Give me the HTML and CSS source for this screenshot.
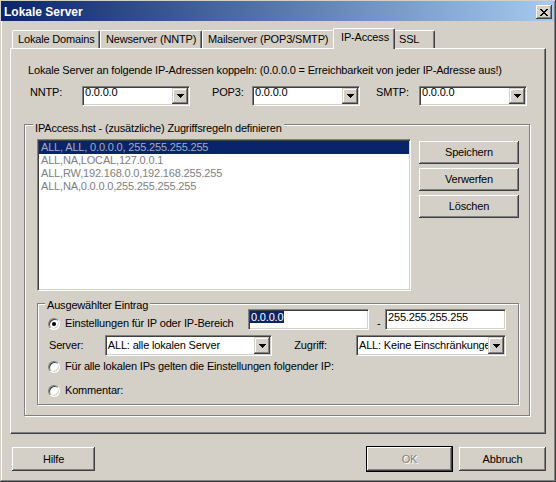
FILE: index.html
```html
<!DOCTYPE html>
<html lang="de">
<head>
    <meta charset="UTF-8">
    <title>Lokale Server</title>
    <link rel="stylesheet" href="styles.css">
</head>
<body>
<div class="window">
    <div class="titlebar">
        <span class="title">Lokale Server</span>
        <span class="close-btn">
            <svg width="8" height="7" viewBox="0 0 8 7" shape-rendering="crispEdges"><path d="M0 0h2v1h1v1h2V1h1V0h2v1H7v1H6v1H5v1h1v1h1v1h1v1H6V6H5V5H3v1H2v1H0V6h1V5h1V4h1V3H2V2H1V1H0z" fill="#000"/></svg>
        </span>
    </div>

    <!-- Reiter -->
    <div class="tabs">
        <div class="tab tab-domains">Lokale Domains</div>
        <div class="tab tab-news">Newserver (NNTP)</div>
        <div class="tab tab-mail">Mailserver (POP3/SMTP)</div>
        <div class="tab tab-ip active">IP-Access</div>
        <div class="tab tab-ssl">SSL</div>
    </div>

    <div class="panel">
        <p class="intro">Lokale Server an folgende IP-Adressen koppeln: (0.0.0.0 = Erreichbarkeit von jeder IP-Adresse aus!)</p>

        <div class="bind-row">
            <span class="bind-label">NNTP:</span>
            <div class="combo bind-combo"><span class="combo-text">0.0.0.0</span><span class="combo-btn"><svg width="7" height="4" viewBox="0 0 7 4" shape-rendering="crispEdges"><path d="M0 0h7v1H6v1H5v1H4v1H3V3H2V2H1V1H0z"/></svg></span></div>
            <span class="bind-label pop3">POP3:</span>
            <div class="combo bind-combo"><span class="combo-text">0.0.0.0</span><span class="combo-btn"><svg width="7" height="4" viewBox="0 0 7 4" shape-rendering="crispEdges"><path d="M0 0h7v1H6v1H5v1H4v1H3V3H2V2H1V1H0z"/></svg></span></div>
            <span class="bind-label smtp">SMTP:</span>
            <div class="combo bind-combo"><span class="combo-text">0.0.0.0</span><span class="combo-btn"><svg width="7" height="4" viewBox="0 0 7 4" shape-rendering="crispEdges"><path d="M0 0h7v1H6v1H5v1H4v1H3V3H2V2H1V1H0z"/></svg></span></div>
        </div>

        <div class="group rules">
            <div class="group-title">IPAccess.hst - (zusätzliche) Zugriffsregeln definieren</div>
            <div class="rules-row">
                <ul class="listbox">
                    <li class="selected">ALL, ALL, 0.0.0.0, 255.255.255.255</li>
                    <li>ALL,NA,LOCAL,127.0.0.1</li>
                    <li>ALL,RW,192.168.0.0,192.168.255.255</li>
                    <li>ALL,NA,0.0.0.0,255.255.255.255</li>
                </ul>
                <div class="side-buttons">
                    <button class="btn side">Speichern</button>
                    <button class="btn side">Verwerfen</button>
                    <button class="btn side">Löschen</button>
                </div>
            </div>

            <div class="group entry">
                <div class="group-title">Ausgewählter Eintrag</div>
                <div class="entry-row">
                    <div class="option range-option"><span class="radio checked"></span>Einstellungen für IP oder IP-Bereich</div>
                    <div class="edit"><span class="sel">0.0.0.0</span></div>
                    <span class="dash">-</span>
                    <div class="edit">255.255.255.255</div>
                </div>
                <div class="entry-row second">
                    <span class="field-label server-label">Server:</span>
                    <div class="combo server-combo"><span class="combo-text">ALL: alle lokalen Server</span><span class="combo-btn"><svg width="7" height="4" viewBox="0 0 7 4" shape-rendering="crispEdges"><path d="M0 0h7v1H6v1H5v1H4v1H3V3H2V2H1V1H0z"/></svg></span></div>
                    <span class="field-label zugriff-label">Zugriff:</span>
                    <div class="combo zugriff-combo"><span class="combo-text">ALL: Keine Einschränkungen</span><span class="combo-btn"><svg width="7" height="4" viewBox="0 0 7 4" shape-rendering="crispEdges"><path d="M0 0h7v1H6v1H5v1H4v1H3V3H2V2H1V1H0z"/></svg></span></div>
                </div>
                <div class="option radio-row third"><span class="radio"></span>Für alle lokalen IPs gelten die Einstellungen folgender IP:</div>
                <div class="option radio-row fourth"><span class="radio"></span>Kommentar:</div>
            </div>
        </div>
    </div>

    <div class="footer">
        <button class="btn help">Hilfe</button>
        <span class="spacer"></span>
        <button class="btn default" disabled>OK</button>
        <button class="btn cancel">Abbruch</button>
    </div>
</div>
</body>
</html>
```

FILE: styles.css
```css
* {
    box-sizing: border-box;
}
body {
    margin: 0;
    font-family: "Liberation Sans", Arial, sans-serif;
    font-size: 11px;
    line-height: 13px;
    letter-spacing: -0.17px;
    color: #000;
    background: #D4D0C8;
}
.window {
    width: 556px;
    height: 482px;
    padding: 1px 2px 2px 1px;
    background: #D4D0C8;
    box-shadow: inset -1px -1px #404040, inset 1px 1px #D4D0C8, inset -2px -2px #808080, inset 2px 2px #fff;
}

/* Titelleiste */
.titlebar {
    display: flex;
    justify-content: space-between;
    align-items: flex-start;
    height: 20px;
    padding: 4px 2px 0 3px;
    background: linear-gradient(to right, #0A246A, #A6CAF0);
    color: #fff;
}
.title {
    font-weight: bold;
    font-size: 12px;
    line-height: 14px;
    letter-spacing: 0;
}
.close-btn {
    width: 16px;
    height: 14px;
    display: flex;
    align-items: center;
    justify-content: center;
    background: #D4D0C8;
    box-shadow: inset -1px -1px #404040, inset 1px 1px #fff, inset -2px -2px #808080;
}

/* Reiter */
.tabs {
    display: flex;
    align-items: flex-start;
    margin: 7px 0 0 11px;
}
.tab {
    margin-top: 2px;
    height: 18px;
    padding: 2px 0 0 5px;
    border: 1px solid #fff;
    border-bottom: none;
    border-right-color: #404040;
    border-radius: 2px 2px 0 0;
    box-shadow: inset -1px 0 #808080;
    white-space: nowrap;
}
.tab-domains { width: 88px; }
.tab-news { width: 102px; }
.tab-mail { width: 133px; }
.tab-ssl { width: 42px; }
.tab.active {
    position: relative;
    z-index: 1;
    width: 62px;
    margin: 0 -2px -1px;
    height: 21px;
    padding-left: 7px;
    background: #D4D0C8;
}
.panel {
    margin-left: 9px;
    width: 536px;
    height: 386px;
    padding-top: 15px;
    border: 1px solid;
    border-color: #fff #404040 #404040 #fff;
    box-shadow: inset -1px -1px #808080;
}
.intro {
    margin: 0 0 0 17px;
}

/* Bindung an IP-Adressen */
.bind-row {
    display: flex;
    align-items: flex-start;
    margin: 9px 0 0 19px;
}
.bind-label {
    width: 52px;
}
.bind-label.pop3 {
    width: 62px;
    padding-left: 22px;
}
.bind-label.smtp {
    width: 59px;
    padding-left: 16px;
}
.bind-combo {
    width: 108px;
    height: 20px;
}

/* Eingabefelder */
.combo, .edit, .listbox {
    background: #fff;
    border: 1px solid;
    border-color: #808080 #fff #fff #808080;
    box-shadow: inset 1px 1px #404040, inset -1px -1px #D4D0C8;
    padding: 1px;
}
.combo {
    display: flex;
}
.combo-text {
    flex: 1;
    overflow: hidden;
    white-space: nowrap;
    padding-left: 1px;
}
.bind-combo .combo-text {
    overflow: visible;
    margin-top: -2px;
}
.server-combo .combo-text,
.zugriff-combo .combo-text {
    padding-top: 2px;
}
.combo-btn {
    flex: none;
    width: 16px;
    display: flex;
    align-items: center;
    justify-content: center;
    background: #D4D0C8;
    box-shadow: inset -1px -1px #404040, inset 1px 1px #D4D0C8, inset -2px -2px #808080, inset 2px 2px #fff;
}
.edit {
    width: 121px;
    height: 21px;
    padding-left: 2px;
    white-space: nowrap;
}
.sel {
    background: #0A246A;
    color: #fff;
    padding: 0 1px;
    margin-left: -1px;
}

/* Gruppen */
.group {
    border: 1px solid #808080;
    box-shadow: inset 1px 1px #fff, 1px 1px #fff;
}
.group-title {
    display: table;
    padding: 0 2px;
    background: #D4D0C8;
}
.rules {
    margin: 18px 0 0 13px;
    width: 506px;
    padding: 0 10px 10px 12px;
}
.rules > .group-title {
    margin: -3px 0 0 -4px;
}
.rules-row {
    display: flex;
    justify-content: space-between;
    align-items: flex-start;
    margin-top: 4px;
}
.listbox {
    width: 374px;
    height: 152px;
    margin: 0;
    list-style: none;
}
.listbox li {
    height: 13px;
    padding-left: 2px;
    color: #808080;
    white-space: nowrap;
}
.listbox li.selected {
    background: #0A246A;
    color: #A8ACBC;
}
.side-buttons {
    display: flex;
    flex-direction: column;
    gap: 4px;
    margin-top: 2px;
}

/* Knöpfe */
.btn {
    font: inherit;
    letter-spacing: inherit;
    color: #000;
    height: 24px;
    padding: 0;
    border: none;
    background: #D4D0C8;
    box-shadow: inset -1px -1px #404040, inset 1px 1px #fff, inset -2px -2px #808080, inset 2px 2px #D4D0C8;
}
.btn.side {
    width: 100px;
    height: 23px;
}

.entry {
    margin-top: 12px;
    padding: 0 12px 7px 10px;
}
.entry > .group-title {
    margin: -5px 0 -3px -3px;
}
.entry-row {
    display: flex;
    align-items: flex-start;
    height: 21px;
}
.entry-row.second {
    margin-top: 5px;
}
.option {
    display: flex;
    align-items: center;
    gap: 5px;
    white-space: nowrap;
}
.range-option {
    width: 200px;
    margin-top: 8px;
}
.dash {
    width: 16px;
    padding-left: 8px;
    margin-top: 8px;
}
.radio {
    flex: none;
    width: 12px;
    height: 12px;
    border-radius: 50%;
    display: flex;
    align-items: center;
    justify-content: center;
    background: #fff;
    border: 1px solid;
    border-color: #808080 #fff #fff #808080;
    box-shadow: inset 1px 1px #404040, inset -1px -1px #D4D0C8;
}
.radio.checked::after {
    content: "";
    width: 4px;
    height: 4px;
    border-radius: 50%;
    background: #000;
}
.field-label {
    white-space: nowrap;
    margin-top: 4px;
}
.server-label {
    width: 57px;
    padding-left: 1px;
}
.server-combo {
    width: 168px;
    height: 21px;
}
.zugriff-label {
    width: 84px;
    padding-left: 22px;
}
.zugriff-combo {
    width: 150px;
    height: 21px;
}
.radio-row.third {
    margin-top: 4px;
}
.radio-row.fourth {
    margin-top: 11px;
}

/* Fußleiste */
.footer {
    display: flex;
    align-items: center;
    margin-top: 12px;
    padding: 0 8px 0 11px;
}
.spacer {
    flex: 1;
}
.btn.help {
    width: 83px;
}
.btn.default {
    width: 87px;
    height: 26px;
    color: #808080;
    text-shadow: 1px 1px #fff;
    box-shadow: inset 0 0 0 1px #000, inset -2px -2px #404040, inset 2px 2px #fff, inset -3px -3px #808080;
}
.btn.cancel {
    width: 87px;
    margin-left: 6px;
}
```
